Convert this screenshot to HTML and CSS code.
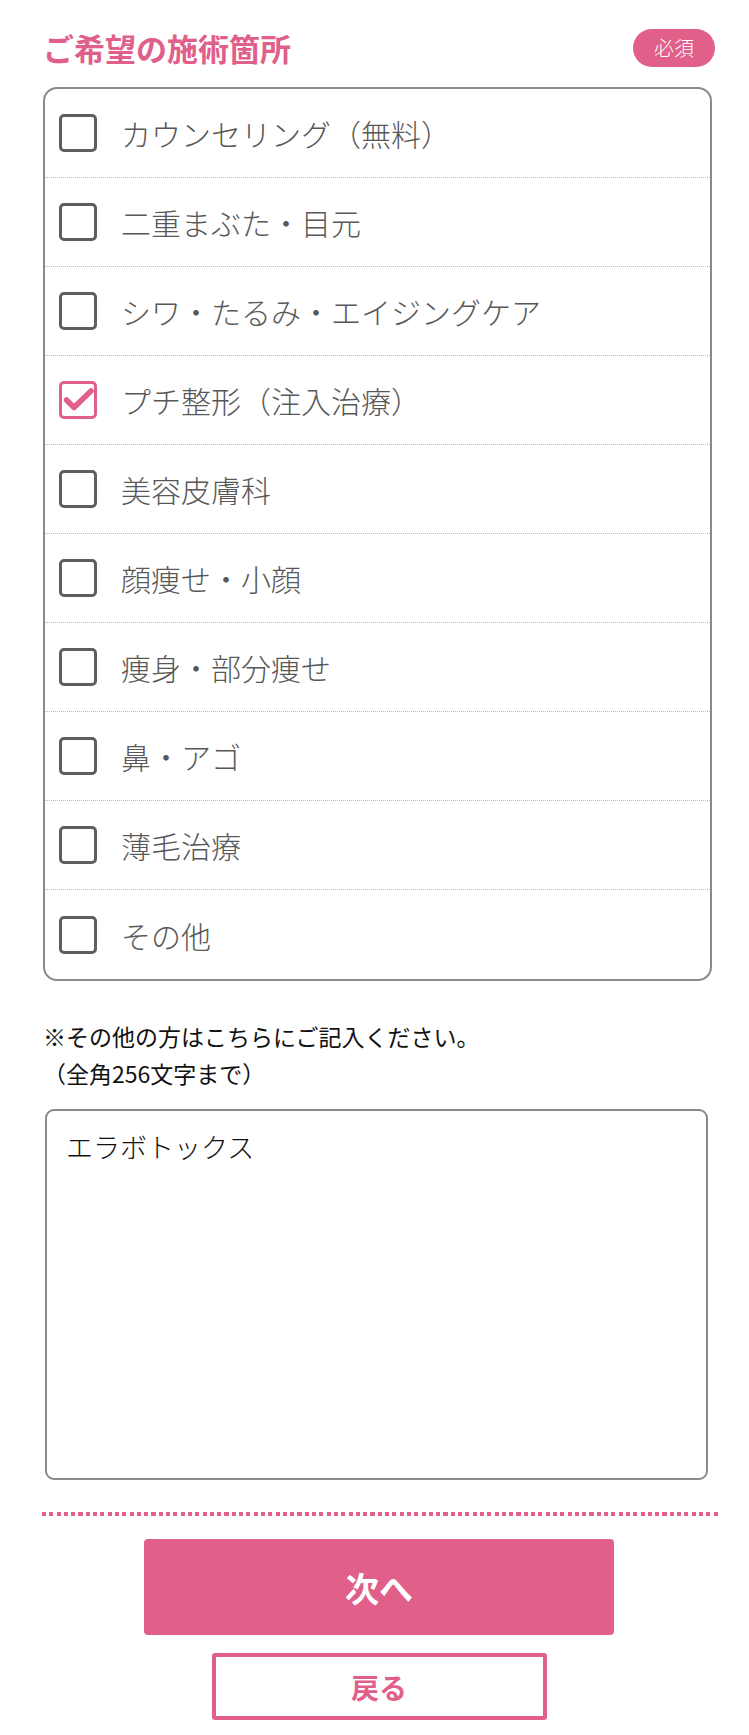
FILE: index.html
```html
<!DOCTYPE html>
<html lang="ja">
<head>
<meta charset="utf-8">
<title>ご希望の施術箇所</title>
<link rel="stylesheet" href="styles.css">
</head>
<body>
<main class="form">
  <div class="head">
    <h2 class="title">ご希望の施術箇所</h2>
    <span class="badge">必須</span>
  </div>

  <ul class="choices">
    <li class="choice"><span class="check"></span><span class="label">カウンセリング（無料）</span></li>
    <li class="choice"><span class="check"></span><span class="label">二重まぶた・目元</span></li>
    <li class="choice"><span class="check"></span><span class="label">シワ・たるみ・エイジングケア</span></li>
    <li class="choice"><span class="check checked"><svg viewBox="0 0 38 38" width="38" height="38"><path d="M7.5 19 L15 26.5 L32 10" fill="none" stroke="#e0608a" stroke-width="5.5" stroke-linecap="round" stroke-linejoin="round"/></svg></span><span class="label">プチ整形（注入治療）</span></li>
    <li class="choice"><span class="check"></span><span class="label">美容皮膚科</span></li>
    <li class="choice"><span class="check"></span><span class="label">顔痩せ・小顔</span></li>
    <li class="choice"><span class="check"></span><span class="label">痩身・部分痩せ</span></li>
    <li class="choice"><span class="check"></span><span class="label">鼻・アゴ</span></li>
    <li class="choice"><span class="check"></span><span class="label">薄毛治療</span></li>
    <li class="choice"><span class="check"></span><span class="label">その他</span></li>
  </ul>

  <p class="note">※その他の方はこちらにご記入ください。<br>（全角256文字まで）</p>

  <textarea class="other" readonly>エラボトックス</textarea>

  <div class="divider"></div>

  <div class="actions">
    <button class="btn-next" type="button">次へ</button>
    <button class="btn-back" type="button">戻る</button>
  </div>
</main>
</body>
</html>
```

FILE: styles.css
```css
* { box-sizing: border-box; }

html, body {
  margin: 0;
  padding: 0;
  background: #ffffff;
}

body {
  font-family: "Noto Sans CJK JP", "Noto Sans", sans-serif;
  color: #555555;
}

.form {
  width: 672px;
  margin-left: 43px;
  padding-top: 29px;
  padding-bottom: 14px;
}

.head {
  display: flex;
  align-items: center;
  justify-content: space-between;
  height: 38px;
}

.title {
  margin: 0;
  font-size: 31px;
  font-weight: 700;
  color: #e0608a;
  line-height: 38px;
  letter-spacing: 0;
}

.badge {
  display: flex;
  align-items: center;
  justify-content: center;
  width: 82px;
  height: 38px;
  border-radius: 19px;
  background: #e0608a;
  color: #ffffff;
  font-size: 20px;
  font-weight: 300;
  line-height: 1;
}

.choices {
  list-style: none;
  margin: 20px 0 0 0;
  padding: 0;
  width: 669px;
  border: 2px solid #8a8a8a;
  border-radius: 14px;
}

.choice {
  display: flex;
  align-items: center;
  height: 89px;
  padding-left: 14px;
  border-bottom: 1px dotted #bcbcbc;
}

.choice:last-child {
  border-bottom: none;
}

.check {
  flex: none;
  width: 38px;
  height: 38px;
  border: 3px solid #5e5e5e;
  border-radius: 5px;
  display: flex;
  align-items: center;
  justify-content: center;
}

.check.checked {
  border-color: #e0608a;
}

.check svg {
  display: block;
  flex: none;
}

.label {
  margin-left: 24px;
  font-size: 30px;
  font-weight: 300;
  line-height: 1;
  color: #585858;
}

.note {
  margin: 37px 0 0 0;
  font-size: 23px;
  line-height: 37px;
  color: #111111;
}

.other {
  display: block;
  margin: 17px 0 0 2px;
  width: 663px;
  height: 371px;
  padding: 16px 19px;
  border: 2px solid #8a8a8a;
  border-radius: 9px;
  resize: none;
  outline: none;
  font-family: "Noto Sans CJK JP", "Noto Sans", sans-serif;
  font-size: 27px;
  font-weight: 300;
  line-height: 40px;
  color: #111111;
  background: #ffffff;
}

.divider {
  margin-top: 32px;
  margin-left: -1px;
  margin-right: -3px;
  height: 4px;
  background-image: repeating-linear-gradient(to right, #e0608a 0, #e0608a 4px, transparent 4px, transparent 7.3px);
}

.actions {
  display: flex;
  flex-direction: column;
  align-items: center;
  gap: 18px;
  margin-top: 23px;
}

.btn-next {
  width: 470px;
  height: 96px;
  border: none;
  border-radius: 4px;
  background: #e0608a;
  color: #ffffff;
  font-family: "Noto Sans CJK JP", "Noto Sans", sans-serif;
  font-size: 34px;
  font-weight: 700;
  cursor: pointer;
}

.btn-back {
  width: 335px;
  height: 67px;
  border: 4px solid #e0608a;
  border-radius: 3px;
  background: #ffffff;
  color: #e0608a;
  font-family: "Noto Sans CJK JP", "Noto Sans", sans-serif;
  font-size: 28px;
  font-weight: 700;
  cursor: pointer;
}
```
